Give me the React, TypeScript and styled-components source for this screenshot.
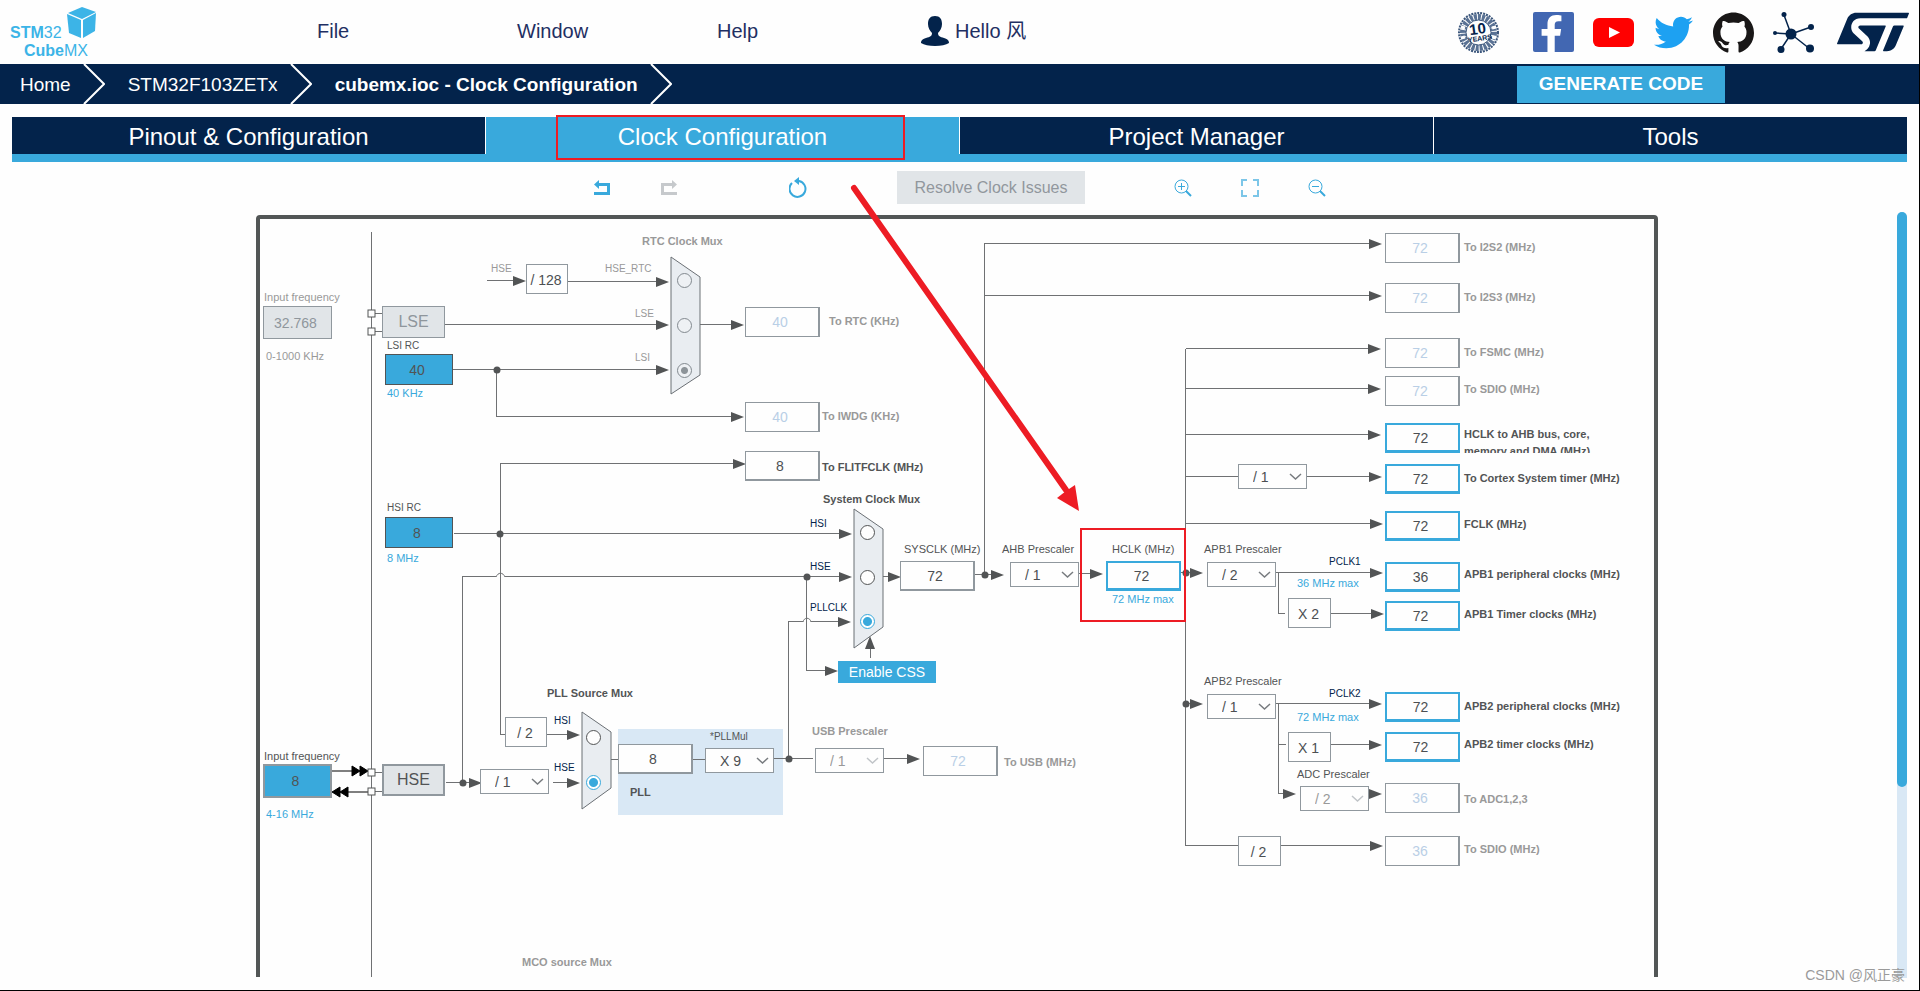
import React from "react";
import styled, { createGlobalStyle, css } from "styled-components";
import { FaFacebookF, FaTwitter } from "react-icons/fa";
import { SiGithub, SiStmicroelectronics } from "react-icons/si";

const navy = "#03234b";
const sky = "#39a9dc";
const pale = "#d9e8f5";
const dark = "#525455";
const edge = "#90989e";
const muted = "#999999";
const panel = "#e1e5e8";
const red = "#ed1c24";

const GlobalStyle = createGlobalStyle`
  *, *::before, *::after { box-sizing: border-box; }
  body { margin: 0; background: #ffffff; }
  body, button, input, select {
    font-family: "Liberation Sans", "Noto Sans CJK SC", sans-serif;
  }
`;

/* ---------- page frame ---------- */

const Page = styled.div`
  position: relative;
  display: flex;
  flex-direction: column;
  min-height: 100vh;
  background: #fefefe;
  border-right: 1px solid #000000;
  border-bottom: 1px solid #000000;
  overflow: hidden;
`;

const Header = styled.header`
  display: flex;
  align-items: center;
  height: 64px;
  padding-right: 10px;
`;

const LogoLink = styled.a`
  flex: 0 1 317px;
  height: 64px;
`;

const Menu = styled.nav`
  display: flex;
  flex: 1;
`;

const MenuButton = styled.button`
  display: flex;
  align-items: center;
  gap: 6px;
  flex: 0 1 200px;
  padding: 0 0 2px;
  border: 0;
  background: none;
  color: #1f2f63;
  font-size: 20px;
  line-height: 30px;
  text-align: left;
  white-space: nowrap;
`;

const UserButton = styled(MenuButton)`
  margin-left: 4px;
`;

const Links = styled.div`
  display: flex;
  align-items: center;
  gap: 19px;
`;

const IconLink = styled.a<{ $color?: string; $before?: number }>`
  display: flex;
  justify-content: center;
  color: ${(p) => p.$color ?? navy};
  margin-left: ${(p) => p.$before ?? 0}px;
  min-width: 41px;
`;

const FacebookTile = styled.span`
  display: flex;
  align-items: flex-end;
  justify-content: flex-end;
  width: 41px;
  height: 40px;
  padding-right: 4px;
  border-radius: 2px;
  background: #4267b2;
  color: #ffffff;
  overflow: hidden;
`;

/* ---------- breadcrumb ---------- */

const Crumbs = styled.nav`
  display: flex;
  align-items: center;
  height: 40px;
  padding: 0 194px 0 20px;
  background: ${navy};
`;

const Crumb = styled.a<{ $current?: boolean }>`
  margin-right: 12px;
  padding-top: 1px;
  color: #ffffff;
  font-size: 19px;
  font-weight: ${(p) => (p.$current ? 700 : 400)};
  text-decoration: none;
  white-space: nowrap;
`;

const CrumbArrow = styled.svg`
  flex: none;
  width: 22px;
  height: 40px;
  margin-right: 23px;
  fill: none;
  stroke: #ffffff;
  stroke-width: 2;
`;

const GenerateButton = styled.button`
  width: 208px;
  height: 37px;
  margin-left: auto;
  padding: 0;
  border: 0;
  background: ${sky};
  color: #ffffff;
  font-size: 19px;
  font-weight: 700;
`;

/* ---------- tabs ---------- */

const Tabs = styled.div`
  display: flex;
  gap: 1px;
  margin: 13px 12px 0;
  background: linear-gradient(#ffffff 37px, ${sky} 37px);
`;

const TabCell = styled.div`
  position: relative;
  flex: 1;
`;

const Tab = styled.button<{ $active?: boolean }>`
  display: block;
  width: 100%;
  height: 45px;
  padding: 2px 0 0;
  border: 0;
  border-bottom: 8px solid ${sky};
  background: ${(p) => (p.$active ? sky : navy)};
  color: #ffffff;
  font-size: 24px;
  line-height: 35px;
`;

const TabHighlight = styled.span`
  position: absolute;
  top: -2px;
  left: 70px;
  right: 54px;
  height: 45px;
  border: 2px solid ${red};
  pointer-events: none;
`;

/* ---------- toolbar ---------- */

const Toolbar = styled.div<{ $gap: number }>`
  display: flex;
  align-items: center;
  justify-content: center;
  gap: ${(p) => p.$gap}px;
`;

const MainToolbar = styled(Toolbar)`
  padding: 9px 0 6px;
`;

const ToolButton = styled.button`
  display: flex;
  align-items: center;
  justify-content: center;
  width: 24px;
  height: 24px;
  padding: 0;
  border: 0;
  background: none;
`;

const ResolveButton = styled.button`
  width: 188px;
  height: 33px;
  padding: 0;
  border: 0;
  background: ${panel};
  color: #91979d;
  font-size: 16px;
`;

/* ---------- clock tree ---------- */

const Workspace = styled.main`
  display: flex;
  flex: 1;
  margin: 0 12px 12px 13px;
`;

const Stage = styled.div`
  flex: 1;
  min-width: 0;
`;

const Board = styled.div`
  position: relative;
  width: 1410px;
  height: 767px;
  margin: 0 auto;
`;

const Wiring = styled.svg`
  position: absolute;
  top: 0;
  left: 0;
  width: 1410px;
  height: 767px;
  overflow: visible;
`;

const ScrollTrack = styled.div`
  width: 10px;
  margin: 2px 0 0;
  border-radius: 5px 5px 0 0;
  background: ${pale};
`;

const ScrollThumb = styled.div`
  height: 75%;
  border-radius: 5px;
  background: ${sky};
`;

type Spot = { $x: number; $y: number };

const at = css<Spot>`
  position: absolute;
  left: ${(p) => p.$x}px;
  top: ${(p) => p.$y}px;
`;

const Caption = styled.label<Spot & { $color: string; $bold?: boolean; $small?: boolean }>`
  ${at}
  color: ${(p) => p.$color};
  font-size: ${(p) => (p.$small ? 10 : 11)}px;
  font-weight: ${(p) => (p.$bold ? 700 : 400)};
  line-height: 16px;
  white-space: nowrap;
`;

const ClippedCaption = styled(Caption)`
  width: 150px;
  height: 27px;
  overflow: hidden;
  line-height: 17px;
  white-space: normal;
`;

type Tone = "off" | "plain" | "live" | "source" | "sourceHse" | "locked";

const tones: Record<Tone, { border: string; width: string; fill: string; text: string }> = {
  off: { border: edge, width: "1px 2px 1px 1px", fill: "#fefefe", text: "#b9cfe6" },
  plain: { border: edge, width: "1px 2px 2px 1px", fill: "#fefefe", text: "#4c4f52" },
  live: { border: sky, width: "2px 2px 3px", fill: "#fefefe", text: "#4c4f52" },
  source: { border: dark, width: "1px", fill: sky, text: dark },
  sourceHse: { border: edge, width: "2px", fill: sky, text: dark },
  locked: { border: edge, width: "1px", fill: panel, text: "#8f969c" },
};

const ValueField = styled.input<Spot & { $w: number; $h: number; $tone: Tone }>`
  ${at}
  width: ${(p) => p.$w}px;
  height: ${(p) => p.$h}px;
  padding: 0 4px 0 0;
  border-style: solid;
  border-width: ${(p) => tones[p.$tone].width};
  border-color: ${(p) => tones[p.$tone].border};
  border-radius: 0;
  background: ${(p) => tones[p.$tone].fill};
  color: ${(p) => tones[p.$tone].text};
  font-size: 14px;
  text-align: center;
  outline: none;
`;

const FactorBox = styled.output<Spot & { $w: number }>`
  ${at}
  width: ${(p) => p.$w}px;
  height: 30px;
  border: 1px solid ${edge};
  background: #fefefe;
  color: #4c4f52;
  font-size: 14px;
  line-height: 30px;
  padding-right: 2px;
  text-align: center;
  white-space: nowrap;
`;

const OscillatorButton = styled.button<Spot & { $on?: boolean }>`
  ${at}
  width: 63px;
  height: 32px;
  padding: 0;
  border: ${(p) => (p.$on ? 2 : 1)}px solid ${edge};
  background: ${panel};
  color: ${(p) => (p.$on ? dark : "#8f969c")};
  font-size: 16px;
`;

const CssButton = styled.button<Spot>`
  ${at}
  width: 98px;
  height: 22px;
  padding: 0;
  border: 0;
  background: ${sky};
  color: #ffffff;
  font-size: 14px;
`;

const PickWrap = styled.div<Spot>`
  ${at}
  width: 69px;
  height: 25px;
`;

const Pick = styled.select`
  appearance: none;
  display: block;
  width: 100%;
  height: 100%;
  padding: 0 20px 0 14px;
  border: 1px solid ${edge};
  border-radius: 0;
  background: #fefefe;
  color: #4c4f52;
  font-size: 14px;
  opacity: 1;
  &:disabled {
    color: ${muted};
  }
`;

const PickChevron = styled.svg<{ $off?: boolean }>`
  position: absolute;
  right: 5px;
  top: 9px;
  width: 13px;
  height: 8px;
  fill: none;
  stroke: ${(p) => (p.$off ? "#c0c4c8" : "#777b7f")};
  stroke-width: 1.5;
  pointer-events: none;
`;

const MuxRadio = styled.input<Spot>`
  ${at}
  appearance: none;
  width: 15px;
  height: 15px;
  margin: 0;
  border: 1px solid ${dark};
  border-radius: 50%;
  background: #fefefe;
  &:checked {
    border-color: ${sky};
    background: radial-gradient(circle, ${sky} 0 4px, #fefefe 5px);
  }
  &:disabled {
    border-color: #82898f;
    background: #eef1f4;
  }
  &:disabled:checked {
    background: radial-gradient(circle, #8d9499 0 3px, #eef1f4 4px);
  }
`;

const HclkHighlight = styled.div`
  position: absolute;
  left: 830px;
  top: 318px;
  width: 106px;
  height: 94px;
  border: 2px solid ${red};
  pointer-events: none;
`;

const Watermark = styled.span`
  position: absolute;
  right: 14px;
  bottom: 5px;
  color: #9a9a9a;
  font-size: 14px;
  line-height: 20px;
`;

/* ---------- data ---------- */

type LabelSpec = { t: string; x: number; y: number; c?: string; b?: boolean; s?: boolean; f?: string };

/* y is the middle of the line of text */
const labels: LabelSpec[] = [
  { t: "Input frequency", x: 14, y: 87, c: muted, f: "lse-in" },
  { t: "0-1000 KHz", x: 16, y: 146, c: muted },
  { t: "LSI RC", x: 137, y: 136, s: true, f: "lsi" },
  { t: "40 KHz", x: 137, y: 183, c: sky },
  { t: "HSI RC", x: 137, y: 298, s: true, f: "hsi" },
  { t: "8 MHz", x: 137, y: 348, c: sky },
  { t: "Input frequency", x: 14, y: 546, f: "hse-in" },
  { t: "4-16 MHz", x: 16, y: 604, c: sky },
  { t: "RTC Clock Mux", x: 392, y: 31, c: muted, b: true },
  { t: "HSE", x: 241, y: 59, c: muted, s: true },
  { t: "HSE_RTC", x: 355, y: 59, c: muted, s: true },
  { t: "LSE", x: 385, y: 104, c: muted, s: true },
  { t: "LSI", x: 385, y: 148, c: muted, s: true },
  { t: "To RTC (KHz)", x: 579, y: 111, c: muted, b: true, f: "rtc" },
  { t: "To IWDG (KHz)", x: 572, y: 206, c: muted, b: true, f: "iwdg" },
  { t: "To FLITFCLK (MHz)", x: 572, y: 257, b: true, f: "flitf" },
  { t: "System Clock Mux", x: 573, y: 289, b: true },
  { t: "HSI", x: 560, y: 314, c: navy, s: true },
  { t: "HSE", x: 560, y: 357, c: navy, s: true },
  { t: "PLLCLK", x: 560, y: 398, c: navy, s: true },
  { t: "SYSCLK (MHz)", x: 654, y: 339, f: "sysclk" },
  { t: "AHB Prescaler", x: 752, y: 339, f: "ahb" },
  { t: "HCLK (MHz)", x: 862, y: 339, f: "hclk" },
  { t: "72 MHz max", x: 862, y: 389, c: sky },
  { t: "APB1 Prescaler", x: 954, y: 339, f: "apb1" },
  { t: "PCLK1", x: 1079, y: 352, c: navy, s: true },
  { t: "36 MHz max", x: 1047, y: 373, c: sky },
  { t: "APB2 Prescaler", x: 954, y: 471, f: "apb2" },
  { t: "PCLK2", x: 1079, y: 484, c: navy, s: true },
  { t: "72 MHz max", x: 1047, y: 507, c: sky },
  { t: "ADC Prescaler", x: 1047, y: 564, f: "adc" },
  { t: "PLL Source Mux", x: 297, y: 483, b: true },
  { t: "HSI", x: 304, y: 511, c: navy, s: true },
  { t: "HSE", x: 304, y: 558, c: navy, s: true },
  { t: "*PLLMul", x: 460, y: 527, s: true, f: "pllmul" },
  { t: "PLL", x: 380, y: 582, b: true },
  { t: "USB Prescaler", x: 562, y: 521, c: muted, b: true, f: "usbdiv" },
  { t: "To USB (MHz)", x: 754, y: 552, c: muted, b: true, f: "usb" },
  { t: "MCO source Mux", x: 272, y: 752, c: muted, b: true },
  { t: "To I2S2 (MHz)", x: 1214, y: 37, c: muted, b: true, f: "i2s2" },
  { t: "To I2S3 (MHz)", x: 1214, y: 87, c: muted, b: true, f: "i2s3" },
  { t: "To FSMC (MHz)", x: 1214, y: 142, c: muted, b: true, f: "fsmc" },
  { t: "To SDIO (MHz)", x: 1214, y: 179, c: muted, b: true, f: "sdio" },
  { t: "To Cortex System timer (MHz)", x: 1214, y: 268, b: true, f: "cortex" },
  { t: "FCLK (MHz)", x: 1214, y: 314, b: true, f: "fclk" },
  { t: "APB1 peripheral clocks (MHz)", x: 1214, y: 364, b: true, f: "apb1p" },
  { t: "APB1 Timer clocks (MHz)", x: 1214, y: 404, b: true, f: "apb1t" },
  { t: "APB2 peripheral clocks (MHz)", x: 1214, y: 496, b: true, f: "apb2p" },
  { t: "APB2 timer clocks (MHz)", x: 1214, y: 534, b: true, f: "apb2t" },
  { t: "To ADC1,2,3", x: 1214, y: 589, c: muted, b: true, f: "adcout" },
  { t: "To SDIO (MHz)", x: 1214, y: 639, c: muted, b: true, f: "sdio2" },
];

type FieldSpec = { id: string; v: string; x: number; y: number; w?: number; h?: number; tone: Tone };

const fields: FieldSpec[] = [
  { id: "lse-in", v: "32.768", x: 13, y: 96, w: 69, h: 33, tone: "locked" },
  { id: "lsi", v: "40", x: 135, y: 144, w: 68, h: 31, tone: "source" },
  { id: "hsi", v: "8", x: 135, y: 307, w: 68, h: 31, tone: "source" },
  { id: "hse-in", v: "8", x: 13, y: 554, w: 69, h: 34, tone: "sourceHse" },
  { id: "rtc", v: "40", x: 495, y: 97, tone: "off" },
  { id: "iwdg", v: "40", x: 495, y: 192, tone: "off" },
  { id: "flitf", v: "8", x: 495, y: 241, tone: "plain" },
  { id: "sysclk", v: "72", x: 650, y: 351, tone: "plain" },
  { id: "hclk", v: "72", x: 856, y: 351, tone: "live" },
  { id: "pll", v: "8", x: 368, y: 534, tone: "plain" },
  { id: "usb", v: "72", x: 673, y: 536, tone: "off" },
  { id: "i2s2", v: "72", x: 1135, y: 23, tone: "off" },
  { id: "i2s3", v: "72", x: 1135, y: 73, tone: "off" },
  { id: "fsmc", v: "72", x: 1135, y: 128, tone: "off" },
  { id: "sdio", v: "72", x: 1135, y: 166, tone: "off" },
  { id: "ahbbus", v: "72", x: 1135, y: 213, tone: "live" },
  { id: "cortex", v: "72", x: 1135, y: 254, tone: "live" },
  { id: "fclk", v: "72", x: 1135, y: 301, tone: "live" },
  { id: "apb1p", v: "36", x: 1135, y: 352, tone: "live" },
  { id: "apb1t", v: "72", x: 1135, y: 391, tone: "live" },
  { id: "apb2p", v: "72", x: 1135, y: 482, tone: "live" },
  { id: "apb2t", v: "72", x: 1135, y: 522, tone: "live" },
  { id: "adcout", v: "36", x: 1135, y: 573, tone: "off" },
  { id: "sdio2", v: "36", x: 1135, y: 626, tone: "off" },
];

const factors = [
  { t: "/ 128", x: 276, y: 54, w: 42 },
  { t: "/ 2", x: 255, y: 507, w: 42 },
  { t: "X 2", x: 1038, y: 388, w: 43 },
  { t: "X 1", x: 1038, y: 522, w: 43 },
  { t: "/ 2", x: 988, y: 626, w: 43 },
];

const picks = [
  { id: "hsediv", name: "HSE divider", v: "/ 1", x: 230, y: 559 },
  { id: "pllmul", name: "PLLMul", v: "X 9", x: 455, y: 538 },
  { id: "usbdiv", name: "USB Prescaler", v: "/ 1", x: 565, y: 538, off: true },
  { id: "ahb", name: "AHB Prescaler", v: "/ 1", x: 760, y: 352 },
  { id: "cortexdiv", name: "Cortex prescaler", v: "/ 1", x: 988, y: 254 },
  { id: "apb1", name: "APB1 Prescaler", v: "/ 2", x: 957, y: 352 },
  { id: "apb2", name: "APB2 Prescaler", v: "/ 1", x: 957, y: 484 },
  { id: "adc", name: "ADC Prescaler", v: "/ 2", x: 1050, y: 576, off: true },
];

const radios = [
  { g: "rtc", n: "HSE_RTC", x: 427, y: 63, off: true },
  { g: "rtc", n: "LSE", x: 427, y: 108, off: true },
  { g: "rtc", n: "LSI", x: 427, y: 153, off: true, on: true },
  { g: "sys", n: "HSI", x: 610, y: 315 },
  { g: "sys", n: "HSE", x: 610, y: 360 },
  { g: "sys", n: "PLLCLK", x: 610, y: 404, on: true },
  { g: "pll", n: "HSI", x: 336, y: 520 },
  { g: "pll", n: "HSE", x: 336, y: 565, on: true },
];

const wires = [
  "122,22 122,767",
  "122,104 132,104", "122,122 132,122", "122,563 132,563", "122,582 132,582",
  "237,71 266,71", "318,72 408,72", "195,115 408,115", "203,160 408,160",
  "247,160 247,207 483,207", "450,115 483,115",
  "487,254 251,254 251,525 255,525", "204,324 591,324",
  "557,367 557,461 577,461",
  "539,549 539,412 553,412", "561,412 590,412", "621,448 621,437",
  "633,367 643,367", "725,365 743,365",
  "735,365 735,34 1121,34", "735,86 1121,86",
  "828,364 842,364", "931,363 942,363",
  "936,139 936,636 988,636", "936,139 1121,139", "936,179 1121,179", "936,225 1121,225",
  "936,267 988,267", "1057,267 1121,267", "936,314 1121,314",
  "1026,363 1121,363", "1029,363 1029,404 1035,404", "1081,404 1121,404",
  "936,494 942,494", "1026,494 1121,494", "1029,494 1029,584 1035,584", "1029,535 1036,535",
  "1081,535 1121,535", "1031,636 1121,636",
  "196,573 223,573", "213,573 213,367 246,367", "255,367 591,367",
  "297,525 319,525", "303,573 319,573",
  "361,550 368,550", "443,550 455,550", "524,549 563,549", "633,549 660,549",
];

/* tips of the right-pointing arrow heads */
const tips = [
  [276, 71], [419, 72], [419, 115], [419, 160], [494, 115], [494, 207], [496, 254],
  [602, 324], [602, 367], [601, 412], [588, 461], [651, 367], [754, 365], [853, 364],
  [953, 363], [953, 494], [1132, 34], [1132, 86], [1131, 139], [1131, 179], [1131, 225],
  [1132, 267], [1133, 314], [1133, 363], [1134, 404], [1132, 494], [1132, 535], [1132, 584],
  [1133, 636], [1046, 584], [232, 573], [330, 525], [330, 573], [670, 549],
];

const dots = [[247, 160], [250, 324], [557, 367], [539, 549], [735, 365], [936, 363], [936, 494], [213, 573]];

const pins = [[122, 104], [122, 122], [122, 563], [122, 582]];

/* ---------- drawings ---------- */

const Logo = () => (
  <svg width="110" height="64" viewBox="0 0 110 64" role="img" aria-label="STM32 CubeMX">
    <g fill="#3cb4e7" fontSize="16">
      <text x="10" y="38">
        <tspan fontWeight="700">STM</tspan>32
      </text>
      <text x="24" y="56">
        <tspan fontWeight="700">Cube</tspan>MX
      </text>
    </g>
    <path d="M68 13 L82 7 L96 12 L82 19 Z" fill="#3cb4e7" />
    <path d="M67 14 L81 20 L81 38 L69 33 Z" fill="#3cb4e7" />
    <path d="M96 13 L83 20 L83 38 L95 31 Z" fill="#3cb4e7" />
  </svg>
);

const UserIcon = () => (
  <svg width="28" height="30" viewBox="0 0 28 30" fill={navy} aria-hidden="true">
    <path d="M14 0 C9 0 7 3 7 8 C7 12 9 15 11 17 C11 20 9 21 5 22 C1 23 0 25 0 27 C3 29 8 30 14 30 C20 30 25 29 28 27 C28 25 27 23 23 22 C19 21 17 20 17 17 C19 15 21 12 21 8 C21 3 19 0 14 0 Z" />
  </svg>
);

const BadgeIcon = () => (
  <svg width="41" height="41" viewBox="0 0 41 41" fill="none" stroke="#3c577c" aria-hidden="true">
    <circle cx="20.5" cy="20.5" r="19.5" strokeWidth="2" strokeDasharray="2 1" />
    <circle cx="20.5" cy="20.5" r="15.5" strokeWidth="6" stroke="#5a7294" strokeDasharray="3 1" />
    <circle cx="20.5" cy="20.5" r="12.5" strokeWidth="1" fill="#fefefe" />
    <path d="M3 15 L7 16 M3 26 L7 25 M38 15 L34 16 M38 26 L34 25" stroke="#fefefe" strokeWidth="3" />
    <text x="20" y="22" fill={navy} stroke="none" fontSize="15" fontWeight="700" textAnchor="middle" transform="rotate(-8 20 20)">10</text>
    <text x="21" y="29" fill={navy} stroke="none" fontSize="7" fontWeight="700" textAnchor="middle" transform="rotate(-8 20 20)">YEARS</text>
  </svg>
);

const YoutubeIcon = () => (
  <svg width="41" height="29" viewBox="0 0 41 29" aria-hidden="true">
    <rect width="41" height="29" rx="6" fill="#ff0000" />
    <path d="M16 9 L27 14.5 L16 20 Z" fill="#ffffff" />
  </svg>
);

const CommunityIcon = () => (
  <svg width="41" height="41" viewBox="0 0 41 41" fill={navy} stroke={navy} strokeWidth="1.5" aria-hidden="true">
    <path d="M18 22 L11 3 M18 22 L38 15 M18 22 L2 21 M18 22 L8 37 M18 22 L37 37" />
    <g stroke="none">
      <circle cx="18" cy="22" r="5.5" />
      <circle cx="11" cy="2.5" r="2.5" />
      <circle cx="38" cy="15" r="3" />
      <circle cx="2" cy="21" r="2" />
      <circle cx="8" cy="37.5" r="3.5" />
      <circle cx="37" cy="36.5" r="4" />
    </g>
  </svg>
);

const StrokeIcon = styled.svg<{ $tone?: string; $weight?: number }>`
  width: 18px;
  height: 18px;
  fill: none;
  stroke: ${(p) => p.$tone ?? sky};
  stroke-width: ${(p) => p.$weight ?? 1};
`;

const ResetGlyph = styled(StrokeIcon)`
  width: 20px;
  height: 21px;
`;

const UndoIcon = () => (
  <StrokeIcon viewBox="0 0 18 18" $weight={3}>
    <path d="M4 5.5 H15.5 V14.5 H1" />
    <path d="M1 5.5 L6 1 V10 Z" fill={sky} stroke="none" />
  </StrokeIcon>
);

const RedoIcon = () => (
  <StrokeIcon viewBox="0 0 18 18" $tone="#c6c9cc" $weight={3}>
    <path d="M14 5.5 H2.5 V14.5 H17" />
    <path d="M17 5.5 L12 1 V10 Z" fill="#c6c9cc" stroke="none" />
  </StrokeIcon>
);

const ResetIcon = () => (
  <ResetGlyph viewBox="0 0 20 21" $weight={2}>
    <path d="M3 6 A8 8 0 1 0 10 4 H7" />
    <path d="M5 4 L10 0 V8 Z" fill={sky} stroke="none" />
  </ResetGlyph>
);

const ZoomIcon = ({ plus }: { plus?: boolean }) => (
  <StrokeIcon viewBox="0 0 18 18">
    <circle cx="7.5" cy="7.5" r="6.5" />
    <path d={plus ? "M4 7.5 H11 M7.5 4 V11" : "M4 7.5 H11"} />
    <path d="M12 12 L17 17" strokeWidth="2" />
  </StrokeIcon>
);

const FitIcon = () => (
  <StrokeIcon viewBox="0 0 18 18" $tone="#7cc6e8" $weight={2}>
    <path d="M1 7 V1 H6 M12 1 H17 V7 M17 11 V17 H12 M6 17 H1 V11" />
  </StrokeIcon>
);

const Connections = () => (
  <Wiring viewBox="0 0 1410 767" aria-hidden="true">
    <path d="M8 767 V9 Q8 7 10 7 H1404 Q1406 7 1406 9 V767" fill="none" stroke="#525656" strokeWidth="4" />
    <rect x="368" y="519" width="165" height="86" fill={pale} />
    <g fill="none" stroke="#6f7173" strokeWidth="1" shapeRendering="crispEdges" transform="translate(-0.5 -0.5)">
      {wires.map((points) => (
        <polyline key={points} points={points} />
      ))}
    </g>
    <g fill="none" stroke="#6f7173">
      <path d="M246 367 C248 362 253 362 255 367" />
      <path d="M553 412 C554 407 560 407 561 412" />
    </g>
    <g fill="#e9edf1" stroke="#6b7075">
      <path d="M421 47 L450 67 V165 L421 184 Z" />
      <path d="M604 299 L633 319 V417 L604 438 Z" />
      <path d="M332 502 L361 522 V578 L332 599 Z" />
    </g>
    <g fill={dark}>
      {tips.map(([x, y]) => (
        <path key={`${x}-${y}`} d={`M${x} ${y} l-13 -5 v10 Z`} />
      ))}
      <path d="M620 426 l-5 13 h10 Z" />
      {dots.map(([x, y]) => (
        <circle key={`${x}-${y}`} cx={x} cy={y} r="3.5" />
      ))}
    </g>
    <g fill="#000000" stroke="#000000">
      <path d="M82 561 H104 M118 582 H96" />
      <path d="M102 556 L110 561 L102 566 Z M110 556 L118 561 L110 566 Z" />
      <path d="M98 577 L90 582 L98 587 Z M90 577 L82 582 L90 587 Z" />
    </g>
    <g fill="#fefefe" stroke={dark}>
      {pins.map(([x, y]) => (
        <rect key={y} x={x - 4} y={y - 4} width="7" height="7" />
      ))}
    </g>
  </Wiring>
);

const Pointer = () => (
  <Wiring viewBox="0 0 1410 767" aria-hidden="true">
    <path d="M604 -22 L816 280" stroke={red} strokeWidth="6" strokeLinecap="round" />
    <path d="M829 301 L825 275 L816 281 L807 288 Z" fill={red} />
  </Wiring>
);

/* ---------- page ---------- */

export default function App() {
  return (
    <Page>
      <GlobalStyle />
      <Header>
        <LogoLink href="#home">
          <Logo />
        </LogoLink>
        <Menu>
          <MenuButton>File</MenuButton>
          <MenuButton>Window</MenuButton>
          <MenuButton>Help</MenuButton>
          <UserButton>
            <UserIcon />
            Hello 风
          </UserButton>
        </Menu>
        <Links>
          <IconLink href="#anniversary" aria-label="10 years">
            <BadgeIcon />
          </IconLink>
          <IconLink href="#facebook" aria-label="Facebook" $before={15}>
            <FacebookTile>
              <FaFacebookF size={37} />
            </FacebookTile>
          </IconLink>
          <IconLink href="#youtube" aria-label="YouTube">
            <YoutubeIcon />
          </IconLink>
          <IconLink href="#twitter" aria-label="Twitter" $color="#1da1f2">
            <FaTwitter size={39} />
          </IconLink>
          <IconLink href="#github" aria-label="GitHub" $color="#191717">
            <SiGithub size={41} />
          </IconLink>
          <IconLink href="#community" aria-label="Community">
            <CommunityIcon />
          </IconLink>
          <IconLink href="#st" aria-label="STMicroelectronics" $before={4}>
            <SiStmicroelectronics size={72} />
          </IconLink>
        </Links>
      </Header>

      <Crumbs>
        {["Home", "STM32F103ZETx", "cubemx.ioc - Clock Configuration"].map((name, i) => (
          <React.Fragment key={name}>
            <Crumb href="#" $current={i === 2}>{name}</Crumb>
            <CrumbArrow viewBox="0 0 22 40" aria-hidden="true">
              <path d="M1 0 L21 20 L1 40" />
            </CrumbArrow>
          </React.Fragment>
        ))}
        <GenerateButton>GENERATE CODE</GenerateButton>
      </Crumbs>

      <Tabs role="tablist">
        {["Pinout & Configuration", "Clock Configuration", "Project Manager", "Tools"].map((name, i) => (
          <TabCell key={name}>
            <Tab role="tab" aria-selected={i === 1} $active={i === 1}>{name}</Tab>
            {i === 1 && <TabHighlight />}
          </TabCell>
        ))}
      </Tabs>

      <MainToolbar $gap={86}>
        <Toolbar $gap={106}>
          <Toolbar $gap={43}>
            <ToolButton aria-label="Undo"><UndoIcon /></ToolButton>
            <ToolButton aria-label="Redo" disabled><RedoIcon /></ToolButton>
          </Toolbar>
          <ToolButton aria-label="Reset"><ResetIcon /></ToolButton>
        </Toolbar>
        <ResolveButton disabled>Resolve Clock Issues</ResolveButton>
        <Toolbar $gap={43}>
          <ToolButton aria-label="Zoom in"><ZoomIcon plus /></ToolButton>
          <ToolButton aria-label="Fit"><FitIcon /></ToolButton>
          <ToolButton aria-label="Zoom out"><ZoomIcon /></ToolButton>
        </Toolbar>
      </MainToolbar>

      <Workspace>
        <Stage>
          <Board>
            <Connections />
            {labels.map((l) => (
              <Caption
                key={`${l.t}-${l.x}-${l.y}`}
                as={l.f ? "label" : "span"}
                htmlFor={l.f}
                $x={l.x}
                $y={l.y - 8}
                $color={l.c ?? dark}
                $bold={l.b}
                $small={l.s}
              >
                {l.t}
              </Caption>
            ))}
            <ClippedCaption htmlFor="ahbbus" $x={1214} $y={216} $color={dark} $bold>
              HCLK to AHB bus, core, memory and DMA (MHz)
            </ClippedCaption>
            {fields.map((f) => (
              <ValueField
                key={f.id}
                id={f.id}
                aria-label={f.id === "pll" ? "PLL input" : undefined}
                defaultValue={f.v}
                readOnly={f.tone !== "live"}
                $x={f.x}
                $y={f.y}
                $w={f.w ?? 75}
                $h={f.h ?? 30}
                $tone={f.tone}
              />
            ))}
            {factors.map((f) => (
              <FactorBox key={`${f.x}-${f.y}`} $x={f.x} $y={f.y} $w={f.w}>{f.t}</FactorBox>
            ))}
            {picks.map((p) => (
              <PickWrap key={p.id} $x={p.x} $y={p.y}>
                <Pick id={p.id} aria-label={p.name} disabled={p.off}>
                  <option>{p.v}</option>
                </Pick>
                <PickChevron viewBox="0 0 13 8" $off={p.off} aria-hidden="true">
                  <path d="M1 1 L6.5 6 L12 1" />
                </PickChevron>
              </PickWrap>
            ))}
            {radios.map((r) => (
              <MuxRadio
                key={`${r.g}-${r.n}`}
                type="radio"
                name={r.g}
                aria-label={r.n}
                defaultChecked={r.on}
                disabled={r.off}
                $x={r.x}
                $y={r.y}
              />
            ))}
            <OscillatorButton $x={132} $y={96}>LSE</OscillatorButton>
            <OscillatorButton $x={132} $y={554} $on>HSE</OscillatorButton>
            <CssButton $x={588} $y={451}>Enable CSS</CssButton>
            <HclkHighlight />
            <Pointer />
          </Board>
        </Stage>
        <ScrollTrack>
          <ScrollThumb />
        </ScrollTrack>
      </Workspace>
      <Watermark>CSDN @风正豪</Watermark>
    </Page>
  );
}
